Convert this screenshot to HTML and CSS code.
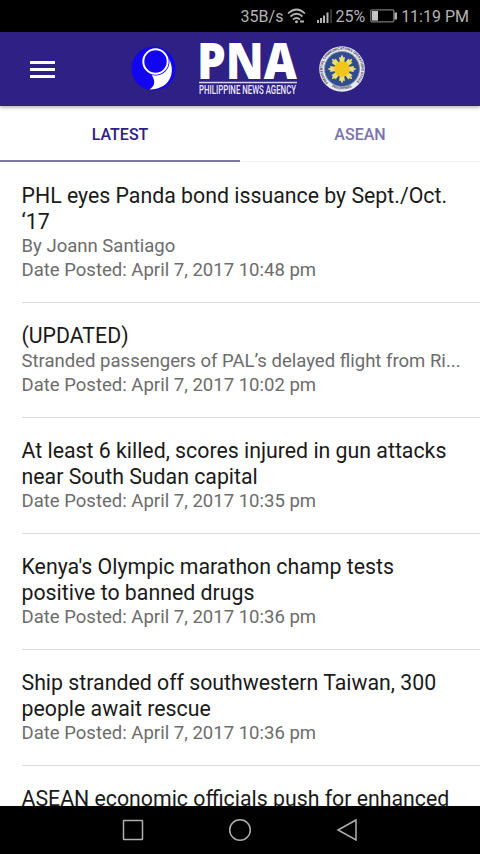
FILE: index.html
```html
<!DOCTYPE html>
<html lang="en">
<head>
    <meta charset="UTF-8">
    <meta name="viewport" content="width=device-width, initial-scale=1.0">
    <title>Philippine News Agency</title>
    <link rel="stylesheet" href="styles.css">
</head>
<body>
    <div class="status">
        <span class="speed">35B/s</span>
        <svg class="wifi" width="19" height="16" viewBox="0 0 19 16">
            <path d="M1 5.5Q9.500 -2.500 18 5.500M3.500 8.500Q9.500 3 15.500 8.500M6 11.500Q9.500 8.500 13 11.500" fill="none" stroke="#b4b4b4" stroke-width="1.700"/>
            <circle cx="9.500" cy="13.800" r="1.500" fill="#b4b4b4"/>
            <path d="M13 13.500h4" stroke="#b4b4b4" stroke-width="2"/>
        </svg>
        <svg class="signal" width="15" height="14" viewBox="0 0 15 14">
            <path d="M1 11v3M4 9v5M7 6.500v7.500M10.500 3.500v10.500" stroke="#b4b4b4" stroke-width="2"/>
            <path d="M14 0v14" stroke="#444" stroke-width="1.500"/>
        </svg>
        <span class="percent">25%</span>
        <svg class="battery" width="27" height="14" viewBox="0 0 27 14">
            <rect x=".8" y=".8" width="23" height="12" rx="1" fill="none" stroke="#777" stroke-width="1.300"/>
            <rect x="2" y="2" width="6" height="9.600" fill="#c4c4c4"/>
            <rect x="24.500" y="3.500" width="2.500" height="7" fill="#b4b4b4"/>
        </svg>
        <span class="clock">11:19 PM</span>
    </div>

    <div class="header">
        <div class="menu">
            <span></span>
            <span></span>
            <span></span>
        </div>
        <svg class="logo" width="46" height="46" viewBox="0 0 46 46">
            <circle cx="22.500" cy="22.500" r="22" fill="#1205f0"/>
            <path d="M38 13C44 23 42 43 18.500 43.500C24 40 25 35 20 28Z" fill="#fff"/>
            <circle cx="24.500" cy="15.500" r="14" fill="#1205f0"/>
            <circle cx="24.500" cy="15.500" r="12.200" fill="#1205f0" stroke="#fff" stroke-width="2"/>
        </svg>
        <svg class="wordmark" width="98" height="54" viewBox="0 0 98 54">
            <text class="pna" x="-2" y="37" textLength="100" lengthAdjust="spacingAndGlyphs">PNA</text>
            <path d="M0 40.500h98" stroke="#d8d4f0" stroke-width="1.500"/>
            <text class="agency" x="0" y="52" textLength="97" lengthAdjust="spacingAndGlyphs">PHILIPPINE NEWS AGENCY</text>
        </svg>
        <svg class="seal" width="46" height="46" viewBox="0 0 46 46">
            <defs>
                <path id="ring" d="M9.300 36.700A19.400 19.400 0 1 1 36.700 36.700"/>
                <path id="ring-bottom" d="M12 40.300A20.500 20.500 0 0 0 34 40.300"/>
                <path id="ray" d="M21 17L20 11L21.500 11.500L23 8.500L24.500 11.500L26 11L25 17Z"/>
            </defs>
            <circle cx="23" cy="23" r="22.800" fill="#e9e9ef"/>
            <circle cx="23" cy="23" r="17.500" fill="#304c8c" stroke="#8591b4"/>
            <text class="seal-text"><textPath href="#ring" textLength="90">PRESIDENTIAL COMMUNICATIONS OPERATIONS OFFICE</textPath></text>
            <text class="seal-text"><textPath href="#ring-bottom" startOffset="1">PHILIPPINES</textPath></text>
            <g fill="#e8dc7c">
                <use href="#ray"/>
                <use href="#ray" transform="rotate(45 23 23)"/>
                <use href="#ray" transform="rotate(90 23 23)"/>
                <use href="#ray" transform="rotate(135 23 23)"/>
                <use href="#ray" transform="rotate(180 23 23)"/>
                <use href="#ray" transform="rotate(225 23 23)"/>
                <use href="#ray" transform="rotate(270 23 23)"/>
                <use href="#ray" transform="rotate(315 23 23)"/>
            </g>
            <circle cx="23" cy="23" r="7.800" fill="#f2c51c"/>
        </svg>
    </div>

    <div class="tabs">
        <div class="tab active">LATEST</div>
        <div class="tab">ASEAN</div>
    </div>

    <ul class="news">
        <li>
            <h2>PHL eyes Panda bond issuance by Sept./Oct. ‘17</h2>
            <p>By Joann Santiago</p>
            <p>Date Posted: April 7, 2017 10:48 pm</p>
        </li>
        <li>
            <h2>(UPDATED)</h2>
            <p>Stranded passengers of PAL’s delayed flight from Ri...</p>
            <p>Date Posted: April 7, 2017 10:02 pm</p>
        </li>
        <li>
            <h2>At least 6 killed, scores injured in gun attacks near South Sudan capital</h2>
            <p>Date Posted: April 7, 2017 10:35 pm</p>
        </li>
        <li>
            <h2>Kenya's Olympic marathon champ tests positive to banned drugs</h2>
            <p>Date Posted: April 7, 2017 10:36 pm</p>
        </li>
        <li>
            <h2>Ship stranded off southwestern Taiwan, 300 people await rescue</h2>
            <p>Date Posted: April 7, 2017 10:36 pm</p>
        </li>
        <li>
            <h2>ASEAN economic officials push for enhanced</h2>
        </li>
    </ul>

    <div class="navbar">
        <svg width="24" height="24" viewBox="0 0 24 24"><rect x="2.500" y="2.500" width="19" height="19" rx=".5"/></svg>
        <svg width="24" height="24" viewBox="0 0 24 24"><circle cx="12" cy="12" r="10.300"/></svg>
        <svg width="24" height="24" viewBox="0 0 24 24"><path d="M21 2L3 12L21 22Z"/></svg>
    </div>
</body>
</html>
```
FILE: styles.css
```css
body,ul,li,h2,p{
    margin: 0;
    padding: 0;
    list-style: none;
    font-weight: normal;
}
body{
    height: 854px;
    display: flex;
    flex-direction: column;
    overflow: hidden;
    background: #fff;
    font-family: Roboto, "Liberation Sans", sans-serif;
}
/* status bar */
.status{
    height: 32px;
    flex: none;
    box-sizing: border-box;
    padding-right: 11px;
    display: flex;
    justify-content: flex-end;
    align-items: center;
    background: #000;
    color: #b4b4b4;
    font-size: 16px;
    line-height: 33px;
}
.wifi{
    margin-left: 4px;
}
.signal{
    margin-left: 11px;
}
.percent{
    margin-left: 3px;
}
.battery{
    margin: 0 4px 0 5px;
}
/* header */
.header{
    height: 74px;
    flex: none;
    box-sizing: border-box;
    padding-left: 30px;
    display: flex;
    align-items: center;
    background: #2e2085;
    box-shadow: 0 1px 4px rgba(0,0,0,.4);
    z-index: 1;
}
.menu{
    width: 25px;
    display: flex;
    flex-direction: column;
    gap: 4px;
}
.menu span{
    height: 3px;
    background: #fff;
}
.logo{
    margin-left: 76px;
}
.wordmark{
    margin-left: 22px;
    overflow: visible;
}
.pna{
    font-family: "Open Sans", sans-serif;
    font-size: 49px;
    font-weight: 800;
    fill: #fff;
}
.agency{
    font-size: 12.5px;
    font-weight: 500;
    fill: #eceaf8;
}
.seal{
    margin-left: 22px;
}
.seal-text{
    font-size: 3.5px;
    font-weight: bold;
    fill: #3d4258;
}
/* tabs */
.tabs{
    height: 56px;
    flex: none;
    display: flex;
}
.tab{
    flex: 1;
    box-sizing: border-box;
    border-bottom: 1px solid #eee;
    color: #7a74ab;
    font-size: 16px;
    font-weight: 500;
    line-height: 57px;
    text-align: center;
}
.active{
    border-bottom: 2px solid #7c78a4;
    color: #2e2085;
}
/* list */
.news{
    flex: 1;
    min-height: 0;
    overflow: hidden;
    padding: .9px 0 0 21.5px;
}
.news li{
    padding: 20.5px 24px 19.6px 0;
    border-bottom: 1px solid #dcdcdc;
}
.news h2{
    color: #1a1a1a;
    font-size: 21.3px;
    line-height: 25.5px;
}
.news p{
    color: #6c6c6c;
    font-size: 18.55px;
    line-height: 24px;
    white-space: nowrap;
}
/* bottom buttons */
.navbar{
    height: 48px;
    flex: none;
    display: flex;
    justify-content: center;
    align-items: center;
    gap: 83px;
    background: #000;
}
.navbar svg{
    fill: none;
    stroke: #b0b0b0;
    stroke-width: 1.5;
}
```
